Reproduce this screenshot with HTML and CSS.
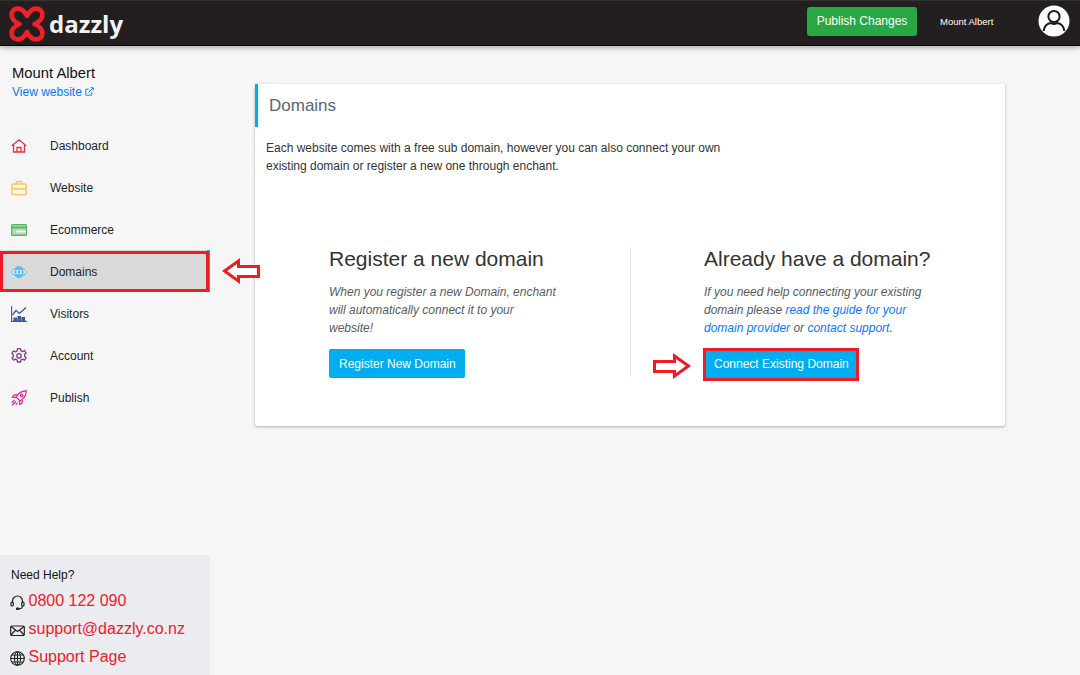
FILE: index.html
```html
<!DOCTYPE html>
<html lang="en">
<head>
<meta charset="utf-8">
<title>Domains</title>
<link rel="stylesheet" href="styles.css">
</head>
<body>
<header class="topbar">
  <div class="brand">
    <svg class="logo" width="36" height="36" viewBox="0 0 36 36" fill="none" stroke="#ee2129" stroke-width="4.600" stroke-linejoin="round" stroke-linecap="round">
      <path d="M18 10C20 6 23 2.600 27 2.600 31 2.600 33.400 5 33.400 9 33.400 13 30 16 25.500 18 30 20 33.400 23 33.400 27 33.400 31 31 33.400 27 33.400 23 33.400 20 30 18 26 16 30 13 33.400 9 33.400 5 33.400 2.600 31 2.600 27 2.600 23 6 20 10.500 18 6 16 2.600 13 2.600 9 2.600 5 5 2.600 9 2.600 13 2.600 16 6 18 10Z"/>
    </svg>
    <span class="wordmark">dazzly</span>
  </div>
  <div class="top-actions">
    <button class="btn-publish">Publish Changes</button>
    <span class="top-user">Mount Albert</span>
    <svg class="avatar" width="32" height="32" viewBox="0 0 32 32">
      <circle cx="16" cy="16" r="15.500" fill="#fff"/>
      <circle cx="16" cy="11.500" r="5.600" fill="none" stroke="#1f1c1d" stroke-width="2"/>
      <path d="M5.500 26 C6.500 20.500 10 18.300 13 18 Q16 20 19 18 C22 18.300 25.500 20.500 26.500 26" fill="none" stroke="#1f1c1d" stroke-width="2"/>
    </svg>
  </div>
</header>

<div class="layout">
  <aside class="sidebar">
    <div class="site">
      <div class="site-name">Mount Albert</div>
      <a class="site-link">View website
        <svg width="9" height="9" viewBox="0 0 9 9" fill="none" stroke="#007bff" stroke-width="0.9"><path d="M6.800 5.200V8.200H.8V2.200H3.800M3.500 5.500L8.200.8M5.600.7H8.300V3.400"/></svg>
      </a>
    </div>
    <nav class="nav">
      <a class="nav-item">
        <svg class="nav-icon" width="16" height="14" viewBox="0 0 16 14" fill="none" stroke="#e8323c" stroke-width="1.300"><path d="M.8 6.800L8 .8l7.200 6M2.500 5.800V13h11V5.800M6 13V8.500h4V13"/></svg>
        <span>Dashboard</span>
      </a>
      <a class="nav-item">
        <svg class="nav-icon" width="16" height="15" viewBox="0 0 16 15" fill="none" stroke="#fcc65b" stroke-width="1.500"><rect x=".8" y="3.500" width="14.400" height="10.700" rx="1.800"/><path d="M5.500 3.500V1h5v2.500M.8 8.200h14.400M4.500 7v2.400M11.500 7v2.400"/></svg>
        <span>Website</span>
      </a>
      <a class="nav-item">
        <svg class="nav-icon" width="16" height="12" viewBox="0 0 16 12"><rect x=".6" y=".6" width="14.800" height="10.800" rx="1" fill="#a6dcae" stroke="#4fb565" stroke-width="1.200"/><path d="M1 3.500h14" stroke="#4fb565" stroke-width="1.600"/><rect x="5" y="6.500" width="10" height="2" fill="#f6f6f6"/></svg>
        <span>Ecommerce</span>
      </a>
      <a class="nav-item is-active">
        <svg class="nav-icon" width="16" height="13" viewBox="0 0 16 13"><path d="M8 .5C5.800.5 4.400 1.700 3.800 3.200 1.600 3.700.3 5 .3 6.500c0 1.700 1.500 3 3.500 3.400C4.600 11.400 6 12.500 8 12.500s3.400-1.100 4.200-2.600c2-.4 3.500-1.700 3.500-3.400 0-1.500-1.300-2.800-3.500-3.300C11.600 1.700 10.200.5 8 .5z" fill="#5cc0f0"/><path d="M1.500 6.500h13" stroke="#d5eefa" stroke-width="3.400"/><circle cx="4.500" cy="6.500" r="1" fill="#2f9fdd"/><circle cx="8" cy="6.500" r="1" fill="#2f9fdd"/><circle cx="11.500" cy="6.500" r="1" fill="#2f9fdd"/></svg>
        <span>Domains</span>
      </a>
      <a class="nav-item">
        <svg class="nav-icon" width="16" height="16" viewBox="0 0 16 16" fill="none" stroke="#3c5a99" stroke-width="1.100"><path d="M.6 0V15.400H16"/><path d="M1.500 9L5 4.500l3.500 3L15 1.500" stroke-width="1.300"/><path d="M3 15v-3h2.500v3M7 15v-4.500h2.500V15M11 15v-3.500h2.500V15" fill="#3c5a99"/></svg>
        <span>Visitors</span>
      </a>
      <a class="nav-item">
        <svg class="nav-icon" width="16" height="16" viewBox="0 0 16 16" fill="none" stroke="#7b3f93" stroke-width="1.300" stroke-linejoin="round"><path d="M6.500.7h3l.5 2.200 1.500.7 2-1.100 1.600 2.300-1.500 1.700v1.700l1.500 1.700-1.600 2.300-2-1.100-1.500.7-.5 2.200h-3l-.5-2.200-1.500-.7-2 1.100L.9 10.200l1.500-1.700V6.800L.9 5.100l1.600-2.300 2 1.100 1.500-.7z"/><circle cx="8" cy="7.800" r="2.200"/></svg>
        <span>Account</span>
      </a>
      <a class="nav-item">
        <svg class="nav-icon" width="16" height="16" viewBox="0 0 16 16" fill="none" stroke="#e6218f" stroke-width="1.200"><path d="M15.200.8c-3.500 0-6.300 1.300-8.300 3.800L5 7l4 4 2.400-1.900C14 7 15.300 4.300 15.200.8z"/><circle cx="10.700" cy="5.300" r="1.300"/><path d="M6 4.800H3L1.500 7.200 5 7.600M11.200 10v3l-2.400 1.500-.4-3.500M3.500 10L.8 12.700M5 11.500L1 15.400M6.500 13l-1.700 1.700"/></svg>
        <span>Publish</span>
      </a>
    </nav>
    <div class="help">
      <div class="help-title">Need Help?</div>
      <a class="help-row">
        <svg width="15" height="15" viewBox="0 0 15 15" fill="none" stroke="#222" stroke-width="1.200"><path d="M2.500 8V6a5 5 0 0 1 10 0v2"/><rect x="1" y="7" width="2.300" height="4" rx="1"/><rect x="11.700" y="7" width="2.300" height="4" rx="1"/><path d="M12.500 11c0 2-1.800 2.800-4 2.800"/><circle cx="7.500" cy="13.800" r="1" fill="#222"/></svg>
        <span>0800 122 090</span>
      </a>
      <a class="help-row">
        <svg width="15" height="15" viewBox="0 0 15 15" fill="none" stroke="#222" stroke-width="1.200"><rect x=".7" y="3" width="13.600" height="9.500" rx="1"/><path d="M1 3.500L7.500 8.500 14 3.500M1 12L5.500 7M14 12L9.500 7"/></svg>
        <span>support@dazzly.co.nz</span>
      </a>
      <a class="help-row">
        <svg width="15" height="15" viewBox="0 0 15 15" fill="none" stroke="#222" stroke-width="1.100"><circle cx="7.500" cy="7.500" r="6.800"/><ellipse cx="7.500" cy="7.500" rx="3" ry="6.800"/><path d="M7.500.7v13.600M.7 7.500h13.600M1.700 4h11.600M1.700 11h11.600"/></svg>
        <span>Support Page</span>
      </a>
    </div>
  </aside>

  <main class="main">
    <section class="card">
      <h1 class="card-title">Domains</h1>
      <p class="intro">Each website comes with a free sub domain, however you can also connect your own existing domain or register a new one through enchant.</p>
      <div class="options">
        <div class="option option-left">
          <h2>Register a new domain</h2>
          <p>When you register a new Domain, enchant will automatically connect it to your website!</p>
          <button class="btn-blue">Register New Domain</button>
        </div>
        <div class="option option-right">
          <h2>Already have a domain?</h2>
          <p>If you need help connecting your existing domain please <a>read the guide for your domain provider</a> or <a>contact support</a>.</p>
          <button class="btn-blue btn-marked">Connect Existing Domain</button>
        </div>
      </div>
    </section>
  </main>
</div>

<div class="mark-nav"></div>
<svg class="arrow arrow-left" width="38" height="26" viewBox="0 0 38 26"><path d="M2.500 13L16.500 3v5.500h20v10h-20V23z" fill="#fff" stroke="#ee1c25" stroke-width="3"/></svg>
<svg class="arrow arrow-right" width="38" height="26" viewBox="0 0 38 26"><path d="M35.500 13L21.500 3v5.500h-20v10h20V23z" fill="#fff" stroke="#ee1c25" stroke-width="3"/></svg>
</body>
</html>
```
FILE: styles.css
```css
* { box-sizing: border-box; }
html, body { margin: 0; height: 100%; }
body {
  position: relative;
  width: 1080px;
  height: 675px;
  overflow: hidden;
  background: #f6f6f6;
  font-family: "Liberation Sans", Arial, sans-serif;
  font-size: 12px;
  color: #212529;
}
.topbar {
  height: 46px;
  padding: 0 10px 0 9px;
  background: #231f20;
  border-top: 1px solid #333;
  border-bottom: 1px solid #000;
  box-shadow: 0 2px 5px rgba(0,0,0,.3);
  display: flex;
  align-items: center;
  justify-content: space-between;
  position: relative;
  z-index: 2;
}
.brand { display: flex; align-items: center; gap: 4px; margin-top: 2px; }
.logo { display: block; }
.wordmark {
  font-family: "Open Sans", sans-serif;
  font-weight: 700;
  font-size: 24px;
  line-height: 36px;
  color: #f2f2f2;
}
.top-actions { display: flex; align-items: center; margin-top: -4px; }
.btn-publish {
  width: 110px;
  height: 29px;
  padding: 0;
  border: 0;
  border-radius: 3px;
  background: #28a745;
  color: #fff;
  font: 12px "Liberation Sans", sans-serif;
}
.top-user { margin-left: 23px; width: 74px; font-size: 9.500px; color: #fff; }
.avatar { display: block; margin-left: 24px; }
.layout { display: flex; height: 629px; }
.sidebar { width: 210px; flex: none; display: flex; flex-direction: column; }
.site { padding: 19px 12px 0; height: 78px; }
.site-name { font-size: 14.800px; line-height: 16px; color: #111; }
.site-link { display: block; margin-top: 3px; line-height: 16px; font-size: 12px; color: #007bff; }
.nav { display: flex; flex-direction: column; }
.nav-item {
  height: 42px;
  padding-top: 2px;
  display: flex;
  align-items: center;
  color: #212529;
  position: relative;
}
.nav-icon { position: absolute; left: 11px; top: 50%; transform: translateY(calc(-50% + 1px)); }
.nav-item span { margin-left: 50px; }
.is-active { background: #d9d9d9; border-right: 3px solid #00aeef; }
.help {
  margin-top: auto;
  height: 120px;
  padding: 13px 0 0 11px;
  background: #ebecef;
}
.help-title { font-size: 12px; line-height: 14px; color: #111; margin-bottom: 4px; }
.help-row {
  height: 28px;
  display: flex;
  align-items: center;
  gap: 3.500px;
  padding-top: 2px;
  font-size: 16px;
  color: #ee2129;
}
.help-row svg { margin-left: -1px; margin-top: 2px; }
.main { flex: 1; padding: 38px 75px 0 45px; }
.card {
  height: 342px;
  background: #fff;
  border-radius: 2px;
  box-shadow: 0 1px 3px rgba(0,0,0,.3);
}
.card-title {
  margin: 0;
  height: 43px;
  padding-left: 11px;
  border-left: 3px solid #00aeef;
  font-size: 17px;
  font-weight: 400;
  line-height: 43px;
  color: #5a6570;
}
.intro { margin: 12px 0 0 11px; width: 470px; line-height: 18px; color: #333; }
.options { display: flex; margin-top: 72px; }
.option { height: 130px; }
.option-left { width: 376px; padding-left: 74px; border-right: 1px solid #e4e4e4; }
.option-right { padding-left: 73px; }
.option h2 { margin: 0; font-size: 21px; font-weight: 400; line-height: 24px; color: #333; }
.option p {
  margin: 12px 0 0;
  width: 232px;
  line-height: 18px;
  font-style: italic;
  color: #555c63;
}
.option a { color: #007bff; }
.option-right p { width: 222px; }
.btn-blue {
  display: block;
  margin-top: 12px;
  height: 29px;
  padding: 0 9.500px 0 10px;
  border: 0;
  border-radius: 2px;
  background: #00aeef;
  color: #fff;
  font: 12px "Liberation Sans", sans-serif;
}
.btn-marked {
  height: 31px;
  padding-bottom: 2px;
  border-radius: 0;
  outline: 3px solid #ee1c25;
  outline-offset: -2px;
}
.mark-nav {
  position: absolute;
  left: 0; top: 251px;
  width: 209px; height: 41px;
  border: 3px solid #ee1c25;
}
.arrow { position: absolute; }
.arrow-left { left: 222px; top: 258px; }
.arrow-right { left: 653px; top: 353px; }
```
